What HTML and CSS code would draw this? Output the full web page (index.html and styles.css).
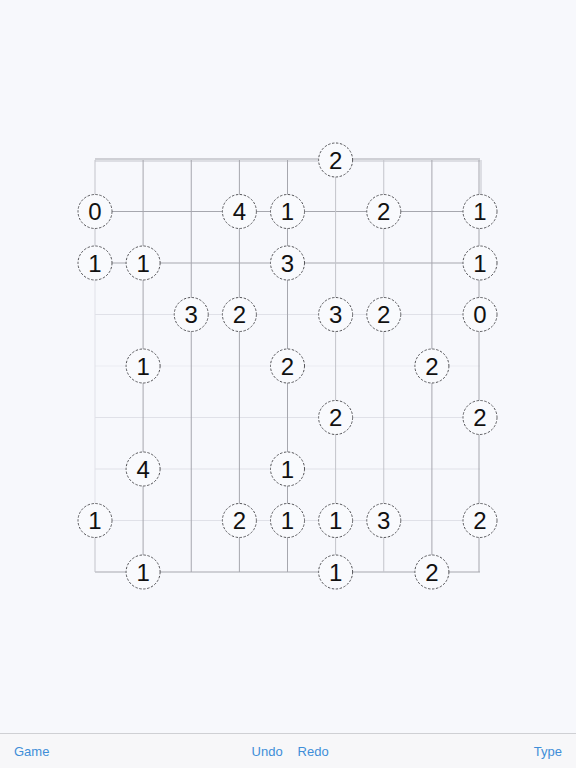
FILE: index.html
```html
<!DOCTYPE html>
<html>
<head>
<meta charset="utf-8">
<link rel="stylesheet" href="styles.css">
</head>
<body>
<div class="app">
  <main class="board-area">
    <svg class="board" width="576" height="733" viewBox="0 0 576 733">
      <g class="grid">
        <line class="ln-dark" x1="95" y1="159" x2="480" y2="159"/>
        <line class="ln-mid" x1="95" y1="161" x2="480" y2="161"/>
        <line class="ln-dark" x1="95" y1="211.5" x2="480" y2="211.5"/>
        <line class="ln-dark" x1="95" y1="263" x2="480" y2="263"/>
        <line class="ln-light" x1="95" y1="314.5" x2="480" y2="314.5"/>
        <line class="ln-faint" x1="95" y1="366" x2="480" y2="366"/>
        <line class="ln-light" x1="95" y1="417.5" x2="480" y2="417.5"/>
        <line class="ln-light" x1="95" y1="469" x2="480" y2="469"/>
        <line class="ln-light" x1="95" y1="520.5" x2="480" y2="520.5"/>
        <line class="ln-dark" x1="95" y1="572" x2="480" y2="572"/>
        <line class="ln-mid" x1="95" y1="160" x2="95" y2="263"/>
        <line class="ln-light" x1="95" y1="263" x2="95" y2="520.5"/>
        <line class="ln-mid" x1="95" y1="520.5" x2="95" y2="572"/>
        <line class="ln-dark" x1="143.1" y1="160" x2="143.1" y2="572"/>
        <line class="ln-dark" x1="191.25" y1="160" x2="191.25" y2="572"/>
        <line class="ln-dark" x1="239.4" y1="160" x2="239.4" y2="572"/>
        <line class="ln-dark" x1="287.5" y1="160" x2="287.5" y2="572"/>
        <line class="ln-mid" x1="335.6" y1="160" x2="335.6" y2="572"/>
        <line class="ln-mid" x1="383.75" y1="160" x2="383.75" y2="572"/>
        <line class="ln-dark" x1="431.9" y1="160" x2="431.9" y2="572"/>
        <line class="ln-dark" x1="479" y1="160" x2="479" y2="572"/>
        <line class="ln-mid" x1="481" y1="160" x2="481" y2="211.5"/>
      </g>
      <g class="islands">
        <g transform="translate(335.6 160)"><circle r="17"/><text y="8.5">2</text></g>

        <g transform="translate(95 211.5)"><circle r="17"/><text y="8.5">0</text></g>
        <g transform="translate(239.4 211.5)"><circle r="17"/><text y="8.5">4</text></g>
        <g transform="translate(287.5 211.5)"><circle r="17"/><text y="8.5">1</text></g>
        <g transform="translate(383.75 211.5)"><circle r="17"/><text y="8.5">2</text></g>
        <g transform="translate(480 211.5)"><circle r="17"/><text y="8.5">1</text></g>

        <g transform="translate(95 263)"><circle r="17"/><text y="8.5">1</text></g>
        <g transform="translate(143.1 263)"><circle r="17"/><text y="8.5">1</text></g>
        <g transform="translate(287.5 263)"><circle r="17"/><text y="8.5">3</text></g>
        <g transform="translate(480 263)"><circle r="17"/><text y="8.5">1</text></g>

        <g transform="translate(191.25 314.5)"><circle r="17"/><text y="8.5">3</text></g>
        <g transform="translate(239.4 314.5)"><circle r="17"/><text y="8.5">2</text></g>
        <g transform="translate(335.6 314.5)"><circle r="17"/><text y="8.5">3</text></g>
        <g transform="translate(383.75 314.5)"><circle r="17"/><text y="8.5">2</text></g>
        <g transform="translate(480 314.5)"><circle r="17"/><text y="8.5">0</text></g>

        <g transform="translate(143.1 366)"><circle r="17"/><text y="8.5">1</text></g>
        <g transform="translate(287.5 366)"><circle r="17"/><text y="8.5">2</text></g>
        <g transform="translate(431.9 366)"><circle r="17"/><text y="8.5">2</text></g>

        <g transform="translate(335.6 417.5)"><circle r="17"/><text y="8.5">2</text></g>
        <g transform="translate(480 417.5)"><circle r="17"/><text y="8.5">2</text></g>

        <g transform="translate(143.1 469)"><circle r="17"/><text y="8.5">4</text></g>
        <g transform="translate(287.5 469)"><circle r="17"/><text y="8.5">1</text></g>

        <g transform="translate(95 520.5)"><circle r="17"/><text y="8.5">1</text></g>
        <g transform="translate(239.4 520.5)"><circle r="17"/><text y="8.5">2</text></g>
        <g transform="translate(287.5 520.5)"><circle r="17"/><text y="8.5">1</text></g>
        <g transform="translate(335.6 520.5)"><circle r="17"/><text y="8.5">1</text></g>
        <g transform="translate(383.75 520.5)"><circle r="17"/><text y="8.5">3</text></g>
        <g transform="translate(480 520.5)"><circle r="17"/><text y="8.5">2</text></g>

        <g transform="translate(143.1 572)"><circle r="17"/><text y="8.5">1</text></g>
        <g transform="translate(335.6 572)"><circle r="17"/><text y="8.5">1</text></g>
        <g transform="translate(431.9 572)"><circle r="17"/><text y="8.5">2</text></g>
      </g>
    </svg>
  </main>
  <nav class="toolbar">
    <span class="tb-btn tb-left">Game</span>
    <span class="tb-center">
      <span class="tb-btn">Undo</span>
      <span class="tb-btn">Redo</span>
    </span>
    <span class="tb-btn tb-right">Type</span>
  </nav>
</div>
</body>
</html>
```

FILE: styles.css
```css
html, body {
  margin: 0;
  padding: 0;
  background: #f7f8fc;
  font-family: "Liberation Sans", Arial, sans-serif;
}

.app {
  width: 576px;
  height: 768px;
  display: flex;
  flex-direction: column;
  overflow: hidden;
}

.board-area {
  flex: 1;
  display: block;
}

.board {
  display: block;
}

.grid line {
  stroke-width: 1;
  fill: none;
}

.ln-dark { stroke: #a6a7ae; }
.ln-mid { stroke: #c3c4cb; }
.ln-light { stroke: #e0e1e8; }
.ln-faint { stroke: #ebecf2; }

.islands circle {
  fill: #f9fafd;
  stroke: #555559;
  stroke-width: 1;
  stroke-dasharray: 2.4 1.6;
}

.islands text {
  font-family: "Liberation Sans", Arial, sans-serif;
  font-size: 24px;
  fill: #111;
  text-anchor: middle;
}

.toolbar {
  height: 34px;
  border-top: 1px solid #cfd0d4;
  background: #f7f7f9;
  display: flex;
  align-items: center;
  justify-content: space-between;
  padding: 0 14px;
}

.tb-btn {
  color: #3f8ed8;
  font-size: 13px;
  font-family: "Liberation Sans", Arial, sans-serif;
}

.tb-center {
  display: flex;
  gap: 15px;
  margin-right: 3px;
}
```
